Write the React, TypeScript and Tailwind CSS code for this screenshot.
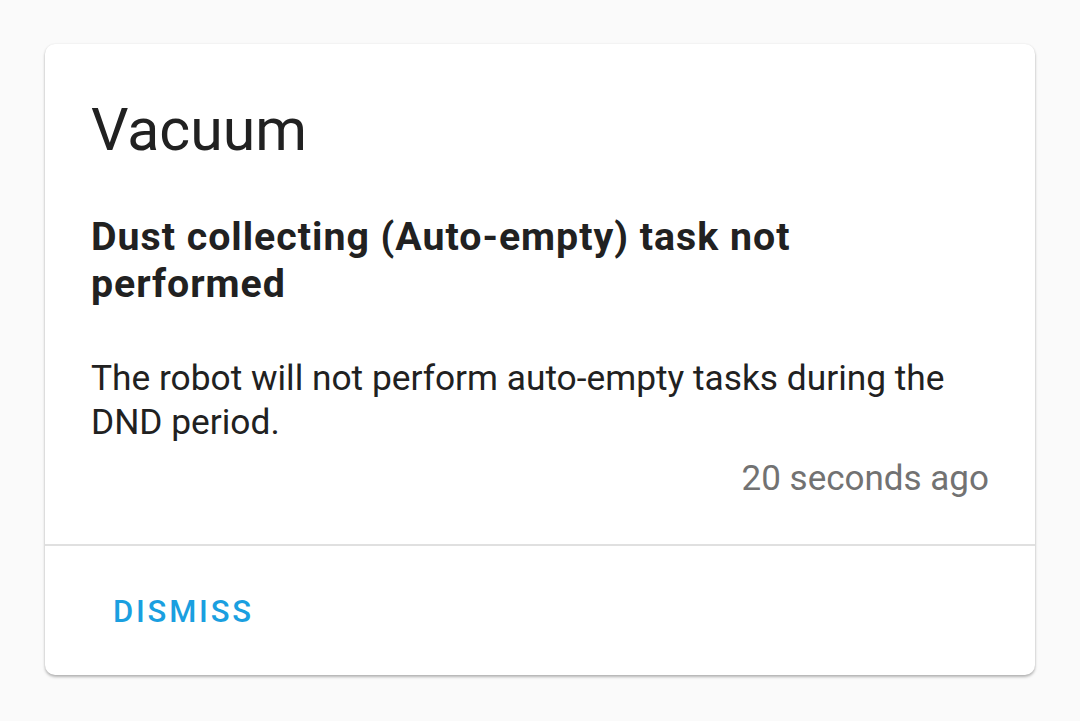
import React from "react";

export default function App() {
  return (
    <div
      className="w-[1080px] h-[721px] bg-[#fafafa] pt-[44px] pl-[45px]"
      style={{ fontFamily: "Roboto, 'Noto Sans', sans-serif" }}
    >
      <div className="w-[990px] h-[631px] bg-white rounded-[10px] shadow-[0_2px_3px_rgba(0,0,0,0.28),0_0_2px_rgba(0,0,0,0.08)] flex flex-col">
        <div className="px-[46px] pt-[51px] pb-[43px] flex flex-col">
          <div className="text-[59px] leading-[70px] text-[#212121] font-normal">Vacuum</div>
          <div className="mt-[49px] text-[39.3px] leading-[47px] font-bold tracking-[0.025em] text-[#212121]">
            Dust collecting (Auto-empty) task not
            <br />
            performed
          </div>
          <div className="mt-[48px] text-[35.3px] leading-[44px] text-[#212121]">
            The robot will not perform auto-empty tasks during the DND period.
          </div>
          <div className="mt-[13px] text-[35px] leading-[44px] text-[#727272] text-right">
            20 seconds ago
          </div>
        </div>
        <div className="h-[2px] bg-[#e0e0e0]" />
        <div className="pt-[48px] pl-[68px]">
          <button className="text-[31px] leading-[36px] font-medium tracking-[0.09em] text-[#1a9fe0] uppercase">
            Dismiss
          </button>
        </div>
      </div>
    </div>
  );
}
